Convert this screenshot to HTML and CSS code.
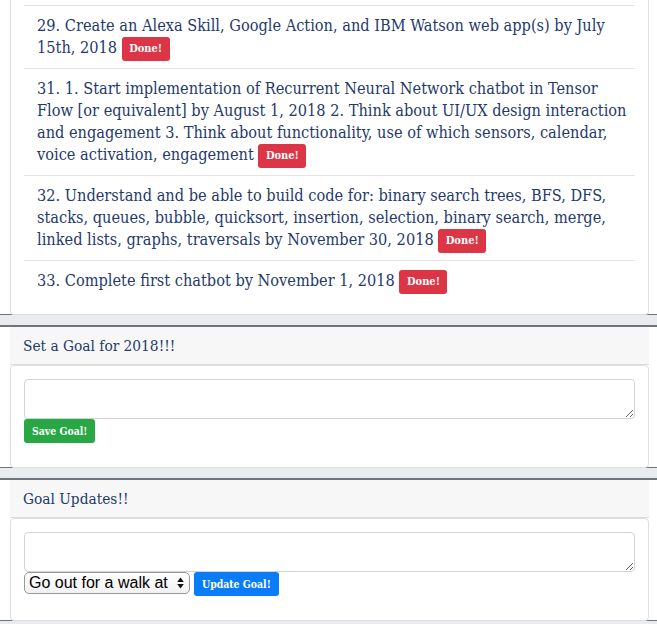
FILE: index.html
```html
<!DOCTYPE html>
<html lang="en">
<head>
<meta charset="utf-8">
<title>Goals</title>
<link rel="stylesheet" href="styles.css">
</head>
<body>
<div class="card goal-list">
  <div class="card-body list-body">
    <ul class="list">
      <li class="item">29. Create an Alexa Skill, Google Action, and IBM Watson web app(s) by July 15th, 2018 <span class="badge">Done!</span></li>
      <li class="item">31. 1. Start implementation of Recurrent Neural Network chatbot in Tensor Flow&nbsp;[or equivalent] by August 1, 2018 2. Think about UI/UX design interaction and engagement 3. Think about functionality, use of which sensors, calendar, voice activation, engagement <span class="badge">Done!</span></li>
      <li class="item">32. Understand and be able to build code for: binary search trees, BFS, DFS, stacks, queues, bubble, quicksort, insertion, selection, binary search, merge, linked lists, graphs, traversals by November 30, 2018 <span class="badge">Done!</span></li>
      <li class="item">33. Complete first chatbot by November 1, 2018 <span class="badge">Done!</span></li>
    </ul>
  </div>
</div>
<div class="sep"></div>

<div class="panel">
  <div class="panel-header">Set a Goal for 2018!!!</div>
  <div class="card panel-body">
    <form class="goal-form">
      <textarea class="field"></textarea>
      <div class="actions">
        <button type="button" class="btn btn-green">Save Goal!</button>
      </div>
    </form>
  </div>
</div>
<div class="sep"></div>

<div class="panel">
  <div class="panel-header">Goal Updates!!</div>
  <div class="card panel-body">
    <form class="goal-form">
      <textarea class="field"></textarea>
      <div class="actions">
        <span class="select-wrap">
          <select class="select">
            <option>Go out for a walk at 7pm every day</option>
          </select>
          <svg class="select-arrows" width="7" height="12" viewBox="0 0 7 12"><path d="M3.5 0.5 L6.8 5 L0.2 5 Z M0.2 7 L6.8 7 L3.5 11.5 Z" fill="#111"/></svg>
        </span>
        <button type="button" class="btn btn-blue">Update Goal!</button>
      </div>
    </form>
  </div>
</div>
<div class="sep"></div>
</body>
</html>
```

FILE: styles.css
```css
html, body {
  margin: 0;
  padding: 0;
  background: #ffffff;
}

body {
  font-family: "DejaVu Serif", serif;
  font-stretch: condensed;
  color: #1f3a6b;
}

.card {
  position: relative;
  background: #ffffff;
  border: 1px solid #dfdfdf;
  border-radius: 4px;
  margin: 0 8px 0 10px;
}

.goal-list {
  border-top: none;
  border-radius: 0 0 4px 4px;
}

.list-body {
  padding: 5px 13px 13px;
}

.list {
  list-style: none;
  margin: 0;
  padding: 0;
}

.item {
  border-top: 1px solid #e3e3e3;
  padding: 9px 3px 9px 13px;
  font-size: 16.2px;
  line-height: 22px;
}

.badge {
  display: inline-block;
  vertical-align: middle;
  margin: -2px 0;
  width: 48px;
  height: 24px;
  line-height: 24px;
  text-align: center;
  background: #dc3545;
  color: #ffffff;
  font-size: 11px;
  font-weight: bold;
  border-radius: 3px;
}

.sep {
  margin-top: -1px;
  height: 10px;
  background: #e9ecef;
  border-top: 1px solid #6c757d;
  border-bottom: 2px solid #6c757d;
}

.panel-header {
  margin: 0 8px 0 10px;
  height: 37px;
  line-height: 38px;
  padding: 0 13px;
  background: #f7f7f7;
  border-bottom: 1px solid #dcdcdc;
  font-size: 15.3px;
}

.panel-body {
  padding: 13px 13px 24px;
}

.goal-form {
  margin: 0;
}

.field {
  display: block;
  box-sizing: border-box;
  width: 100%;
  height: 40px;
  margin: 0;
  border: 1px solid #ced4da;
  border-radius: 4px;
  padding: 4px 8px;
  font-family: inherit;
  resize: vertical;
}

.actions {
  display: flex;
  align-items: flex-start;
  gap: 4px;
}

.btn {
  height: 24px;
  padding: 0 8px;
  border: none;
  border-radius: 3px;
  color: #ffffff;
  font-family: "DejaVu Serif", serif;
  font-stretch: condensed;
  font-weight: bold;
  font-size: 10.4px;
  line-height: 24px;
}

.btn-green {
  background: #28a745;
}

.btn-blue {
  background: #0a7cf7;
}

.select-wrap {
  position: relative;
  display: inline-block;
}

.select {
  display: block;
  -webkit-appearance: none;
  appearance: none;
  box-sizing: border-box;
  width: 166px;
  height: 22px;
  margin: 0;
  padding: 0 18px 0 4px;
  border: 1px solid #9a9a9a;
  border-radius: 5px;
  background: linear-gradient(#ffffff, #f1f1f1);
  color: #000000;
  font-family: "Liberation Sans", Arial, sans-serif;
  font-size: 16px;
  line-height: 20px;
}

.select-arrows {
  position: absolute;
  right: 6px;
  top: 5px;
}
```
